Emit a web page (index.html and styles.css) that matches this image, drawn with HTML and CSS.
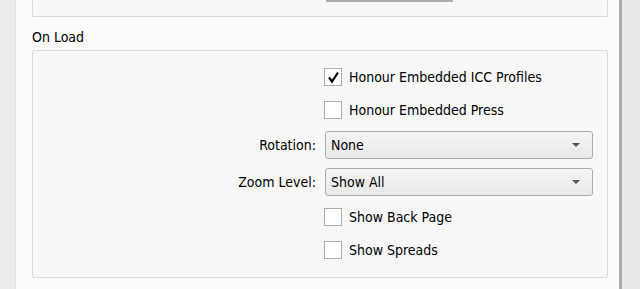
FILE: index.html
```html
<!DOCTYPE html>
<html lang="en">
<head>
    <meta charset="UTF-8">
    <title>Preferences - On Load</title>
    <link rel="stylesheet" href="styles.css">
</head>
<body>
    <div class="side-strip"></div>

    <div class="page">
        <!-- bottom of the previous group, scrolled out of view -->
        <div class="group group-cut">
            <div class="cut-widget"></div>
        </div>

        <div class="group-title">On Load</div>
        <div class="group">
            <div class="row">
                <span></span>
                <label class="check">
                    <span class="box checked">
                        <svg width="13" height="13" viewBox="0 0 13 13"><path d="M2 6.5 L5 10.5 L11 1.5" fill="none" stroke="#000" stroke-width="2.2"/></svg>
                    </span>
                    Honour Embedded ICC Profiles
                </label>
            </div>
            <div class="row">
                <span></span>
                <label class="check"><span class="box"></span>Honour Embedded Press</label>
            </div>
            <div class="row tall">
                <span class="label">Rotation:</span>
                <div class="combo">None<span class="arrow"></span></div>
            </div>
            <div class="row tall">
                <span class="label">Zoom Level:</span>
                <div class="combo">Show All<span class="arrow"></span></div>
            </div>
            <div class="row">
                <span></span>
                <label class="check"><span class="box"></span>Show Back Page</label>
            </div>
            <div class="row">
                <span></span>
                <label class="check"><span class="box"></span>Show Spreads</label>
            </div>
        </div>
    </div>

    <div class="scroll-strip"></div>
</body>
</html>
```

FILE: styles.css
```css
/* Basic page */
body {
    margin: 0;
    height: 289px;
    display: flex;
    font-family: "DejaVu Sans Condensed", "DejaVu Sans", sans-serif;
    font-size: 14px;
    color: #000;
    background: #fbfbfb;
    overflow: hidden;
}

.side-strip {
    width: 15px;
    background: #ebebeb;
    border-right: 1px solid #e2e2e2;
}

.scroll-strip {
    width: 18px;
    background: #e8e8e8;
    border-left: 3px solid #ababab;
}

.page {
    flex: 1;
    padding: 0 11px 0 16px;
}

/* Group boxes */
.group {
    border: 1px solid #dcdcdc;
    border-radius: 2px;
    background: #f7f7f7;
    padding: 14px 14px 15px 0;
    display: flex;
    flex-direction: column;
    gap: 9px;
}

.group-cut {
    height: 17px;
    padding: 0;
    border-top: none;
    border-radius: 0 0 2px 2px;
    box-sizing: border-box;
}

.cut-widget {
    margin-left: 293px;
    width: 127px;
    height: 2px;
    background: #adadad;
}

.group-title {
    padding: 13px 0 5px 0;
    line-height: 15px;
}

/* Form rows */
.row {
    display: grid;
    grid-template-columns: 1fr 268px;
    column-gap: 9px;
    height: 24px;
    align-items: center;
}

.row.tall {
    height: 28px;
}

.label {
    text-align: right;
}

.check {
    display: flex;
    align-items: center;
    gap: 7px;
    margin-left: -1px;
}

.box {
    width: 16px;
    height: 16px;
    border: 1px solid #adadad;
    background: #fff;
    display: flex;
    align-items: center;
    justify-content: center;
}

/* Combo boxes */
.combo {
    height: 26px;
    border: 1px solid #adadad;
    border-radius: 3px;
    background: linear-gradient(#f4f4f4, #e9e9e9);
    display: flex;
    align-items: center;
    justify-content: space-between;
    padding: 0 12px 0 5px;
}

.arrow {
    width: 0;
    height: 0;
    border-left: 4px solid transparent;
    border-right: 4px solid transparent;
    border-top: 4px solid #555;
}
```
